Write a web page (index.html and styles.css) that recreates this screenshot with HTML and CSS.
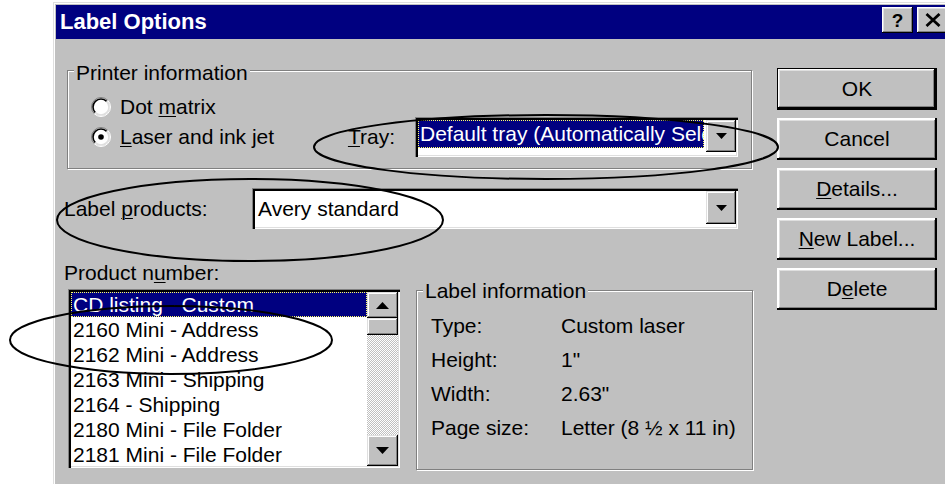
FILE: index.html
```html
<!DOCTYPE html>
<html lang="en">
<head>
<meta charset="utf-8">
<title>Label Options</title>
<link rel="stylesheet" href="styles.css">
</head>
<body>
<div class="window">
  <div class="titlebar">
    <span class="title">Label Options</span>
    <span class="cap-btn">?</span>
    <span class="cap-btn">
      <svg width="16" height="14" viewBox="0 0 16 14"><path d="M1.5 1 L14.5 13 M14.5 1 L1.5 13" stroke="#000" stroke-width="2.8"/></svg>
    </span>
  </div>

  <div class="content">
    <div class="main">
      <div class="group printer">
        <div class="legend">Printer information</div>
        <div class="row first">
          <svg class="radio" width="20" height="20" viewBox="0 0 20 20">
            <circle cx="10" cy="10" r="9" fill="#fff"/>
            <path d="M3.28 16.72 A9.5 9.5 0 0 1 16.72 3.28" fill="none" stroke="#808080"/>
            <path d="M16.72 3.28 A9.5 9.5 0 0 1 3.28 16.72" fill="none" stroke="#fff"/>
            <path d="M4.34 15.66 A8 8 0 0 1 15.66 4.34" fill="none" stroke="#000" stroke-width="1.6"/>
            <path d="M15.66 4.34 A8 8 0 0 1 4.34 15.66" fill="none" stroke="#dfdfdf" stroke-width="1.6"/>
          </svg>
          <span class="radio-text">Dot <u>m</u>atrix</span>
        </div>
        <div class="row">
          <svg class="radio" width="20" height="20" viewBox="0 0 20 20">
            <circle cx="10" cy="10" r="9" fill="#fff"/>
            <path d="M3.28 16.72 A9.5 9.5 0 0 1 16.72 3.28" fill="none" stroke="#808080"/>
            <path d="M16.72 3.28 A9.5 9.5 0 0 1 3.28 16.72" fill="none" stroke="#fff"/>
            <path d="M4.34 15.66 A8 8 0 0 1 15.66 4.34" fill="none" stroke="#000" stroke-width="1.6"/>
            <path d="M15.66 4.34 A8 8 0 0 1 4.34 15.66" fill="none" stroke="#dfdfdf" stroke-width="1.6"/>
            <circle cx="10" cy="10" r="2.8" fill="#000"/>
          </svg>
          <span class="radio-text"><u>L</u>aser and ink jet</span>
          <span class="tray-label"><u>T</u>ray:</span>
          <div class="combo tray">
            <div class="combo-value highlighted"><span>Default tray (Automatically Select)</span></div>
            <div class="drop-btn">
              <svg width="11" height="6" viewBox="0 0 11 6"><polygon points="0,0 11,0 5.5,6" fill="#000"/></svg>
            </div>
          </div>
        </div>
      </div>

      <div class="products-row">
        <span class="field-label">Label <u>p</u>roducts:</span>
        <div class="combo products">
          <div class="combo-value">Avery standard</div>
          <div class="drop-btn">
            <svg width="11" height="6" viewBox="0 0 11 6"><polygon points="0,0 11,0 5.5,6" fill="#000"/></svg>
          </div>
        </div>
      </div>

      <div class="list-caption">Product n<u>u</u>mber:</div>

      <div class="lower">
        <div class="listbox">
          <ul class="items">
            <li class="selected">CD listing - Custom</li>
            <li>2160 Mini - Address</li>
            <li>2162 Mini - Address</li>
            <li>2163 Mini - Shipping</li>
            <li>2164 - Shipping</li>
            <li>2180 Mini - File Folder</li>
            <li>2181 Mini - File Folder</li>
          </ul>
          <div class="scrollbar">
            <div class="sb-btn up">
              <svg width="13" height="7" viewBox="0 0 13 7"><polygon points="0,7 13,7 6.5,0" fill="#000"/></svg>
            </div>
            <div class="sb-thumb"></div>
            <div class="sb-track"></div>
            <div class="sb-btn down">
              <svg width="13" height="7" viewBox="0 0 13 7"><polygon points="0,0 13,0 6.5,7" fill="#000"/></svg>
            </div>
          </div>
        </div>

        <div class="group info">
          <div class="legend">Label information</div>
          <div class="info-rows">
            <div class="info-row"><span class="info-key">Type:</span><span>Custom laser</span></div>
            <div class="info-row"><span class="info-key">Height:</span><span>1"</span></div>
            <div class="info-row"><span class="info-key">Width:</span><span>2.63"</span></div>
            <div class="info-row"><span class="info-key">Page size:</span><span>Letter (8 ½ x 11 in)</span></div>
          </div>
        </div>
      </div>
    </div>

    <div class="buttons">
      <div class="btn default">OK</div>
      <div class="btn">Cancel</div>
      <div class="btn"><u>D</u>etails...</div>
      <div class="btn"><u>N</u>ew Label...</div>
      <div class="btn">D<u>e</u>lete</div>
    </div>
  </div>
</div>

<svg class="marks" width="945" height="484" viewBox="0 0 945 484">
  <ellipse cx="546" cy="147" rx="232" ry="32" fill="none" stroke="#000" stroke-width="2"/>
  <ellipse cx="250" cy="220" rx="193" ry="41" fill="none" stroke="#000" stroke-width="2"/>
  <ellipse cx="171" cy="340" rx="161" ry="34" fill="none" stroke="#000" stroke-width="2"/>
</svg>
</body>
</html>
```

FILE: styles.css
```css
html, body {
  margin: 0;
  padding: 0;
}

body {
  position: relative;
  width: 945px;
  height: 484px;
  overflow: hidden;
  background: #fff;
  color: #000;
  font: 21px/24px "Liberation Sans", Arial, sans-serif;
}

u {
  text-decoration-thickness: 1px;
  text-underline-offset: 2px;
}

/* dialog frame */
.window {
  box-sizing: border-box;
  margin: 2px 0 0 53px;
  width: 910px;
  height: 500px;
  padding: 2px 0 0 2px;
  background: #c0c0c0;
  border-left: 1px solid #dfdfdf;
  border-top: 1px solid #dfdfdf;
  box-shadow: inset 1px 1px #fff;
}

.titlebar {
  box-sizing: border-box;
  display: flex;
  width: 894px;
  height: 34px;
  padding: 0 2px 0 4px;
  background: #000080;
  color: #fff;
}

.title {
  flex: 1;
  font-weight: bold;
  font-size: 22px;
  line-height: 34px;
}

.cap-btn {
  box-sizing: border-box;
  display: flex;
  align-items: center;
  justify-content: center;
  width: 31px;
  height: 26px;
  margin-top: 2px;
  background: #c0c0c0;
  color: #000;
  font-weight: bold;
  font-size: 19px;
  line-height: 1;
  box-shadow: inset -1px -1px #000, inset 1px 1px #fff, inset -2px -2px #808080, inset 2px 2px #dfdfdf;
}

.cap-btn + .cap-btn {
  margin-left: 4px;
}

/* body of the dialog */
.content {
  display: flex;
  padding-left: 8px;
}

.main {
  width: 689px;
  flex: none;
}

/* etched group boxes */
.group {
  box-sizing: border-box;
  border: 1px solid #808080;
  box-shadow: inset 1px 1px #fff, 1px 1px #fff;
}

.legend {
  width: fit-content;
  padding: 0 2px;
  margin-left: 6px;
  background: #c0c0c0;
  line-height: 24px;
}

.printer {
  width: 685px;
  margin: 31px 0 0 3px;
  padding: 0 13px 16px 0;
}

.printer .legend {
  margin-top: -10px;
}

.row {
  display: flex;
  align-items: center;
  height: 30px;
  padding-left: 23px;
}

.row.first {
  margin-top: 7px;
}

.radio {
  flex: none;
  display: block;
}

.radio-text {
  margin-left: 9px;
  white-space: nowrap;
}

.tray-label {
  margin-left: auto;
  margin-right: 20px;
}

/* combo boxes */
.combo {
  box-sizing: border-box;
  display: flex;
  align-items: flex-start;
  flex: none;
  padding: 3px 2px 2px 3px;
  background: #fff;
  box-shadow: inset 1px 1px #808080, inset 3px 3px #000, inset -1px -1px #fff, inset -2px -2px #dfdfdf;
}

.combo.tray {
  width: 323px;
  height: 40px;
}

.combo.products {
  width: 486px;
  height: 41px;
}

.combo-value {
  flex: 1;
  min-width: 0;
  overflow: hidden;
  white-space: nowrap;
}

.products .combo-value {
  padding-left: 3px;
  line-height: 36px;
}

.combo-value.highlighted {
  box-sizing: border-box;
  height: 28px;
  margin-right: 2px;
  padding: 2px 0 0 2px;
  background: #000080;
  color: #fff;
  line-height: 24px;
  outline: 1px dotted #ffff66;
  outline-offset: -1px;
}

.drop-btn {
  box-sizing: border-box;
  display: flex;
  align-items: center;
  justify-content: center;
  flex: none;
  width: 30px;
  height: 32px;
  background: #c0c0c0;
  box-shadow: inset -1px -1px #000, inset 1px 1px #dfdfdf, inset -2px -2px #808080, inset 2px 2px #fff;
}

.products .drop-btn {
  height: 33px;
}

.products-row {
  display: flex;
  align-items: center;
  height: 41px;
  margin-top: 19px;
}

.field-label {
  width: 188px;
  flex: none;
}

.list-caption {
  margin-top: 32px;
  line-height: 24px;
}

.lower {
  display: flex;
  align-items: flex-start;
  margin-top: 4px;
}

/* product list */
.listbox {
  box-sizing: border-box;
  display: flex;
  flex: none;
  width: 332px;
  height: 179px;
  margin-left: 4px;
  padding: 3px 2px 2px 3px;
  background: #fff;
  box-shadow: inset 1px 1px #808080, inset 3px 3px #000, inset -1px -1px #fff, inset -2px -2px #dfdfdf;
}

.items {
  flex: 1;
  min-width: 0;
  margin: 0;
  padding: 0;
  list-style: none;
  overflow: hidden;
}

.items li {
  height: 25px;
  padding-left: 2px;
  line-height: 26px;
  white-space: nowrap;
  overflow: hidden;
}

.items li.selected {
  background: #000080;
  color: #fff;
  outline: 1px dotted #ffff66;
  outline-offset: -1px;
}

.scrollbar {
  display: flex;
  flex-direction: column;
  width: 31px;
  flex: none;
}

.sb-btn {
  box-sizing: border-box;
  display: flex;
  align-items: center;
  justify-content: center;
  flex: none;
  background: #c0c0c0;
  box-shadow: inset -1px -1px #000, inset 1px 1px #dfdfdf, inset -2px -2px #808080, inset 2px 2px #fff;
}

.sb-btn.up {
  height: 26px;
}

.sb-btn.down {
  height: 31px;
}

.sb-thumb {
  flex: none;
  height: 17px;
  background: #c0c0c0;
  box-shadow: inset -1px -1px #000, inset 1px 1px #dfdfdf, inset -2px -2px #808080, inset 2px 2px #fff;
}

.sb-track {
  flex: 1;
  background: repeating-conic-gradient(#c0c0c0 0 25%, #fff 0 50%) 0 0 / 2px 2px;
}

/* label information */
.info {
  width: 337px;
  height: 180px;
  margin: 1px 0 0 16px;
  flex: none;
}

.info .legend {
  margin-top: -12px;
}

.info-rows {
  padding: 6px 0 0 14px;
}

.info-row {
  display: flex;
  height: 34px;
  line-height: 34px;
  white-space: nowrap;
}

.info-key {
  width: 130px;
  flex: none;
}

/* command buttons */
.buttons {
  display: flex;
  flex-direction: column;
  gap: 8px;
  margin: 29px 0 0 24px;
}

.btn {
  box-sizing: border-box;
  display: flex;
  align-items: center;
  justify-content: center;
  width: 160px;
  height: 42px;
  background: #c0c0c0;
  box-shadow: inset -2px -2px #000, inset 2px 2px #fff, inset -3px -3px #808080, inset 3px 3px #dfdfdf;
}

.btn.default {
  box-shadow: inset 0 0 0 1px #000, inset -3px -3px #000, inset 2px 2px #fff, inset -4px -4px #808080, inset 3px 3px #dfdfdf;
}

/* hand-drawn circles over the dialog */
.marks {
  position: absolute;
  left: 0;
  top: 0;
  pointer-events: none;
}
```
